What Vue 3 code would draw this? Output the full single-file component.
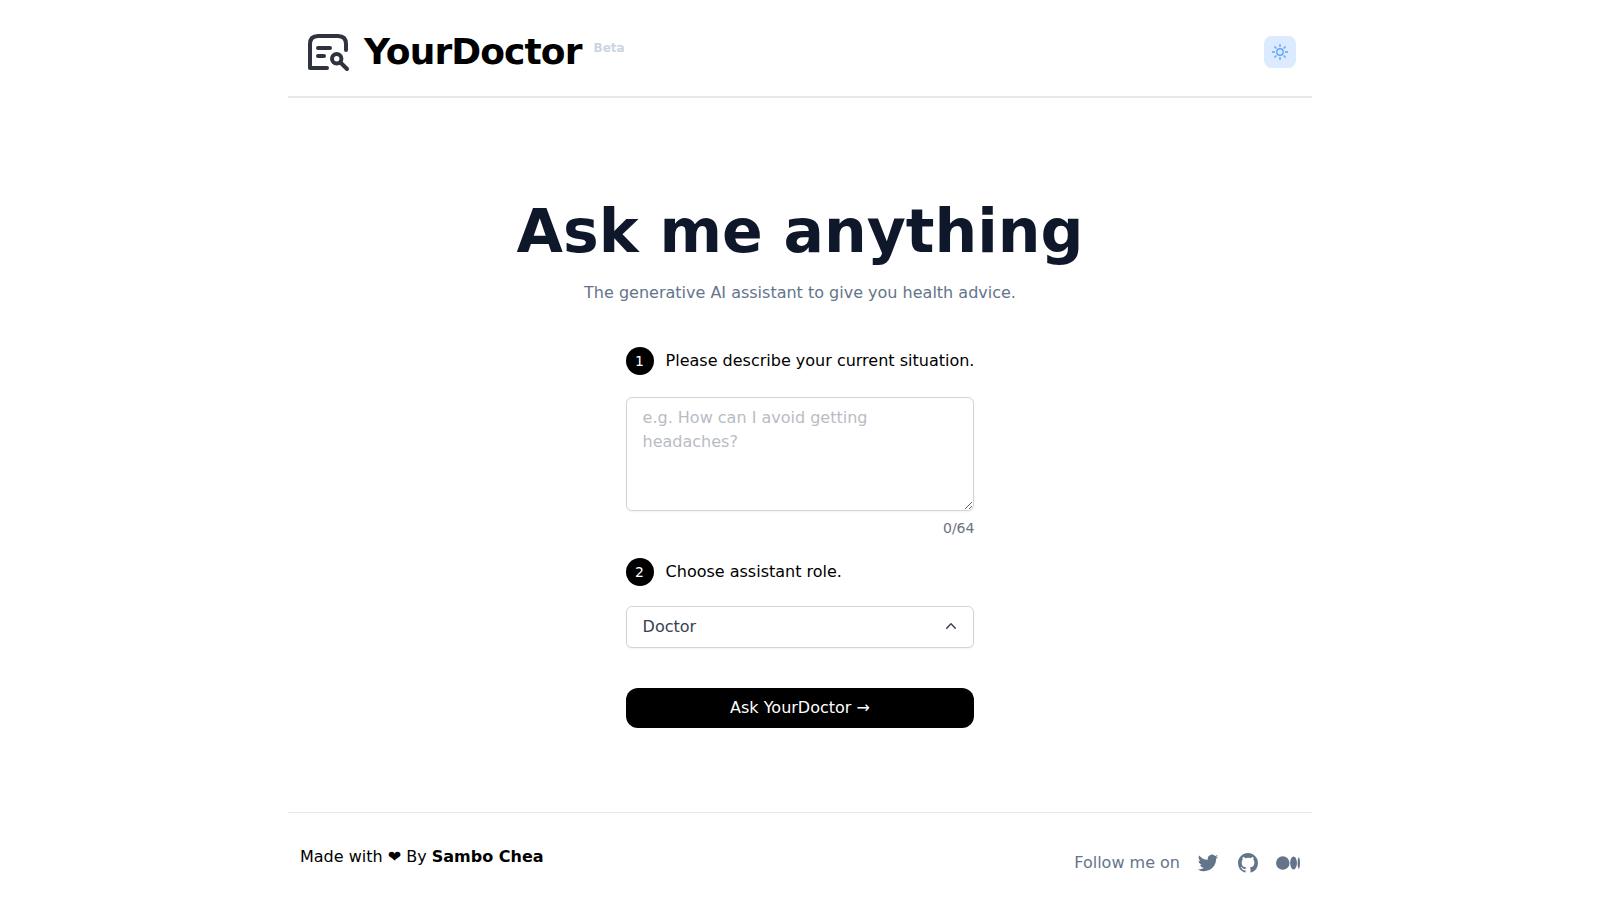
<template>
  <div class="page">
    <header class="header">
      <a class="brand" href="/">
        <svg class="brand-logo" viewBox="0 0 48 48" fill="none" stroke="#2f333f" stroke-width="4" stroke-linecap="round" stroke-linejoin="round" aria-hidden="true">
          <path d="M42 22V16Q42 8 34 8H14Q6 8 6 16V40H23" />
          <path d="M14 20H26M14 28H20" />
          <circle cx="32.7" cy="30.8" r="4.7" />
          <path d="M36.5 34.5L43 41" />
        </svg>
        <span class="brand-name">YourDoctor</span>
        <span class="brand-tag">Beta</span>
      </a>
      <button class="theme-button" type="button" aria-label="Toggle theme">
        <svg viewBox="0 0 16 16" fill="none" stroke="currentColor" stroke-width="1.4" aria-hidden="true">
          <circle cx="8" cy="8" r="3.2" />
          <path d="M8 0V3M8 13V16M0 8H3M13 8H16M2.4 2.4L4.4 4.4M11.6 11.6L13.6 13.6M2.4 13.6L4.4 11.6M11.6 4.4L13.6 2.4" />
        </svg>
      </button>
    </header>

    <main class="main">
      <h1 class="title">Ask me anything</h1>
      <p class="subtitle">The generative AI assistant to give you health advice.</p>

      <form class="form" @submit.prevent>
        <label class="step" for="situation">
          <span class="step-number">1</span>
          Please describe your current situation.
        </label>
        <textarea id="situation" v-model="situation" class="situation" rows="4" :maxlength="maxLength" placeholder="e.g. How can I avoid getting headaches?"></textarea>
        <p class="counter">{{ situation.length }}/{{ maxLength }}</p>

        <label class="step" for="role">
          <span class="step-number">2</span>
          Choose assistant role.
        </label>
        <div class="role">
          <select id="role" v-model="role">
            <option v-for="item in roles" :key="item">{{ item }}</option>
          </select>
          <svg viewBox="0 0 20 20" fill="currentColor" aria-hidden="true">
            <path d="M14.77 12.79a.75.75 0 01-1.06-.02L10 8.832 6.29 12.77a.75.75 0 11-1.08-1.04l4.25-4.5a.75.75 0 011.08 0l4.25 4.5a.75.75 0 01-.02 1.06z" />
          </svg>
        </div>

        <button class="submit" type="submit">Ask YourDoctor →</button>
      </form>
    </main>

    <footer class="footer">
      <p>Made with ❤ By <a class="author" href="#">Sambo Chea</a></p>
      <div class="social">
        <span>Follow me on</span>
        <a v-for="link in links" :key="link.name" :href="link.url" :aria-label="link.name">
          <svg viewBox="0 0 24 24" fill="currentColor" aria-hidden="true"><path :d="link.icon" /></svg>
        </a>
      </div>
    </footer>
  </div>
</template>

<script setup>
import { ref } from 'vue'

const maxLength = 64
const roles = ['Doctor', 'Nurse', 'Pharmacist']

const situation = ref('')
const role = ref('Doctor')

const links = [
  {
    name: 'Twitter',
    url: '#twitter',
    icon: 'M22.162 5.656a8.384 8.384 0 0 1-2.402.658A4.196 4.196 0 0 0 21.6 4c-.82.488-1.719.83-2.656 1.015a4.182 4.182 0 0 0-7.126 3.814 11.874 11.874 0 0 1-8.62-4.37 4.168 4.168 0 0 0-.566 2.103c0 1.45.738 2.731 1.86 3.481a4.168 4.168 0 0 1-1.894-.523v.052a4.185 4.185 0 0 0 3.355 4.101 4.21 4.21 0 0 1-1.89.072A4.185 4.185 0 0 0 7.97 16.65a8.394 8.394 0 0 1-6.191 1.732 11.83 11.83 0 0 0 6.41 1.88c7.693 0 11.9-6.373 11.9-11.9 0-.18-.005-.362-.013-.54a8.496 8.496 0 0 0 2.087-2.165z',
  },
  {
    name: 'GitHub',
    url: '#github',
    icon: 'M12 2C6.475 2 2 6.475 2 12a9.994 9.994 0 0 0 6.838 9.488c.5.087.687-.213.687-.476 0-.237-.013-1.024-.013-1.862-2.512.463-3.162-.612-3.362-1.175-.113-.288-.6-1.175-1.025-1.413-.35-.187-.85-.65-.013-.662.788-.013 1.35.725 1.538 1.025.9 1.512 2.338 1.087 2.912.825.088-.65.35-1.087.638-1.337-2.225-.25-4.55-1.113-4.55-4.938 0-1.088.387-1.987 1.025-2.688-.1-.25-.45-1.275.1-2.65 0 0 .837-.262 2.75 1.026a9.28 9.28 0 0 1 2.5-.338c.85 0 1.7.112 2.5.337 1.912-1.3 2.75-1.024 2.75-1.024.55 1.375.2 2.4.1 2.65.637.7 1.025 1.587 1.025 2.687 0 3.838-2.337 4.688-4.562 4.938.362.312.675.912.675 1.85 0 1.337-.013 2.412-.013 2.75 0 .262.188.574.688.474A10.016 10.016 0 0 0 22 12c0-5.525-4.475-10-10-10z',
  },
  {
    name: 'Medium',
    url: '#medium',
    icon: 'M13.54 12a6.8 6.8 0 0 1-6.77 6.82A6.8 6.8 0 0 1 0 12a6.8 6.8 0 0 1 6.77-6.82A6.8 6.8 0 0 1 13.54 12zM20.96 12c0 3.54-1.51 6.42-3.38 6.42-1.87 0-3.39-2.88-3.39-6.42s1.52-6.42 3.39-6.42 3.38 2.88 3.38 6.42M24 12c0 3.17-.53 5.75-1.19 5.75-.66 0-1.19-2.58-1.19-5.75s.53-5.75 1.19-5.75C23.47 6.25 24 8.83 24 12z',
  },
]
</script>

<style>
body {
  margin: 0;
  background: #fff;
}
</style>

<style scoped>
* {
  box-sizing: border-box;
}
.page {
  display: flex;
  flex-direction: column;
  max-width: 1024px;
  min-height: 100vh;
  margin: 0 auto;
  font-family: "DejaVu Sans", sans-serif;
  font-size: 16px;
  line-height: 24px;
  color: #000;
}
.page p,
.page h1 {
  margin: 0;
}
a {
  color: inherit;
  text-decoration: none;
}
.header {
  display: flex;
  align-items: center;
  justify-content: space-between;
  padding: 28px 16px 20px;
  border-bottom: 2px solid #e5e7eb;
}
.brand {
  display: flex;
  align-items: center;
  gap: 12px;
}
.brand-logo {
  width: 48px;
  height: 48px;
}
.brand-name {
  font-size: 36px;
  font-weight: 700;
  line-height: 40px;
  letter-spacing: -0.025em;
}
.brand-tag {
  align-self: flex-start;
  padding-top: 12px;
  font-size: 12px;
  font-weight: 700;
  line-height: 16px;
  color: #cbd5e1;
}
.theme-button {
  display: flex;
  align-items: center;
  justify-content: center;
  width: 32px;
  height: 32px;
  padding: 0;
  border: 0;
  border-radius: 8px;
  background: #dbeafe;
  color: #60a5fa;
  cursor: pointer;
}
.theme-button svg {
  width: 16px;
  height: 16px;
}
.main {
  display: flex;
  flex: 1;
  flex-direction: column;
  align-items: center;
  padding: 103px 16px 84px;
}
.title {
  font-size: 60px;
  font-weight: 700;
  line-height: 60px;
  text-align: center;
  color: #0f172a;
}
.subtitle {
  padding-top: 20px;
  text-align: center;
  color: #64748b;
}
/* as wide as the longest step label */
.form {
  display: flex;
  flex-direction: column;
  width: fit-content;
  max-width: 100%;
  padding-top: 42px;
}
.step {
  display: flex;
  align-items: center;
  gap: 12px;
}
.step-number {
  display: flex;
  flex-shrink: 0;
  align-items: center;
  justify-content: center;
  width: 28px;
  height: 28px;
  border-radius: 50%;
  background: #000;
  color: #fff;
  font-size: 14px;
  line-height: 20px;
}
.situation {
  display: block;
  width: 100%;
  margin: 22px 0 7px;
  padding: 8px 16px;
  border: 1px solid #d1d5db;
  border-radius: 6px;
  box-shadow: 0 1px 2px rgba(0, 0, 0, 0.05);
  font: inherit;
  color: #374151;
}
.situation::placeholder {
  color: #b9bcc4;
}
.counter {
  padding-bottom: 20px;
  font-size: 14px;
  line-height: 20px;
  text-align: right;
  color: #6b7280;
}
.role {
  position: relative;
  margin: 20px 0 40px;
  color: #374151;
}
.role select {
  display: block;
  width: 100%;
  height: 42px;
  padding: 8px 16px;
  border: 1px solid #d1d5db;
  border-radius: 6px;
  background: #fff;
  box-shadow: 0 1px 2px rgba(0, 0, 0, 0.05);
  appearance: none;
  font: inherit;
  color: inherit;
}
.role svg {
  position: absolute;
  top: 10px;
  right: 13px;
  width: 20px;
  height: 20px;
  pointer-events: none;
}
.submit {
  height: 40px;
  padding: 8px 16px;
  border: 0;
  border-radius: 12px;
  background: #000;
  color: #fff;
  font: inherit;
  cursor: pointer;
}
.footer {
  display: flex;
  align-items: flex-start;
  justify-content: space-between;
  min-height: 88px;
  padding: 32px 12px 0;
  border-top: 1px solid #e5e7eb;
}
.author {
  font-weight: 700;
}
.social {
  display: flex;
  align-items: center;
  gap: 16px;
  padding-top: 6px;
  color: #64748b;
}
.social svg {
  display: block;
  width: 24px;
  height: 24px;
}
</style>
